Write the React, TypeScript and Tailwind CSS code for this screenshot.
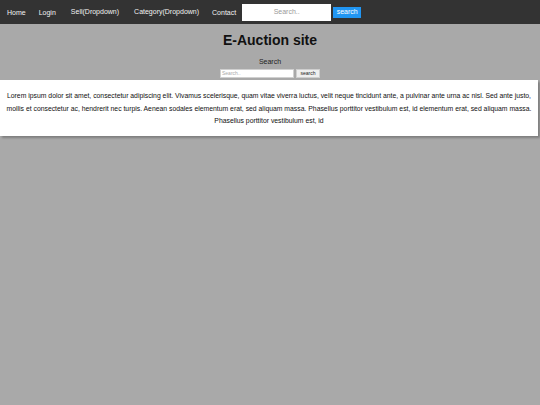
const navFont = { fontFamily: '"Liberation Sans", Arial, sans-serif' };

const NavLink = ({ label, className }: { label: string; className: string }) => (
  <span className={`text-[7px] leading-none text-[#f2f2f2] whitespace-nowrap ${className}`}>{label}</span>
);

const lines = [
  "Lorem ipsum dolor sit amet, consectetur adipiscing elit. Vivamus scelerisque, quam vitae viverra luctus, velit neque tincidunt ante, a pulvinar ante urna ac nisl. Sed ante justo,",
  "mollis et consectetur ac, hendrerit nec turpis. Aenean sodales elementum erat, sed aliquam massa. Phasellus porttitor vestibulum est, id elementum erat, sed aliquam massa.",
  "Phasellus porttitor vestibulum est, id",
];

const App = () => {
  return (
    <div className="min-h-[405px] w-full bg-[#a9a9a9]" style={navFont}>
      {/* Top nav */}
      <div className="flex h-6 items-center bg-[#333333]">
        <NavLink label="Home" className="ml-[7px]" />
        <NavLink label="Login" className="ml-[13px]" />
        <NavLink label="Sell(Dropdown)" className="ml-[15px] -mt-[1px]" />
        <NavLink label="Category(Dropdown)" className="ml-[15px] -mt-[1px]" />
        <NavLink label="Contact" className="ml-[13px]" />
        <div className="ml-[6px] flex h-[17px] w-[89px] items-center justify-center bg-white text-[7px] text-[#9a9a9a]">
          Search..
        </div>
        <div className="ml-[2px] flex h-[11px] w-[28px] items-center justify-center bg-[#2196f3] text-[7px] text-white">
          search
        </div>
      </div>

      {/* Title */}
      <h1 className="mt-[8px] text-center text-[14px] font-bold leading-[16px] text-[#111]">E-Auction site</h1>

      {/* Search block */}
      <div className="mt-[10px] text-center text-[7px] leading-[8px] text-[#222]">Search</div>
      <div className="mt-[3px] flex justify-center gap-[2px]">
        <div className="flex h-[9px] w-[74px] items-center border border-[#d0d0d0] bg-white pl-[1px] text-[5px] text-[#aaa]">
          Search..
        </div>
        <div className="flex h-[9px] w-[24px] items-center justify-center border border-[#cfcfcf] bg-[#efefef] text-[5px] text-[#222]">
          search
        </div>
      </div>

      {/* Text box */}
      <div className="mt-[2px] w-[538px] bg-white pb-[8px] pt-[10px] text-center text-[6.83px] leading-[12.5px] text-[#111] shadow-[2px_2px_2px_rgba(0,0,0,0.25)]">
        {lines.map((line) => (
          <div key={line} className="whitespace-nowrap">
            {line}
          </div>
        ))}
      </div>
    </div>
  );
};

export default App;
